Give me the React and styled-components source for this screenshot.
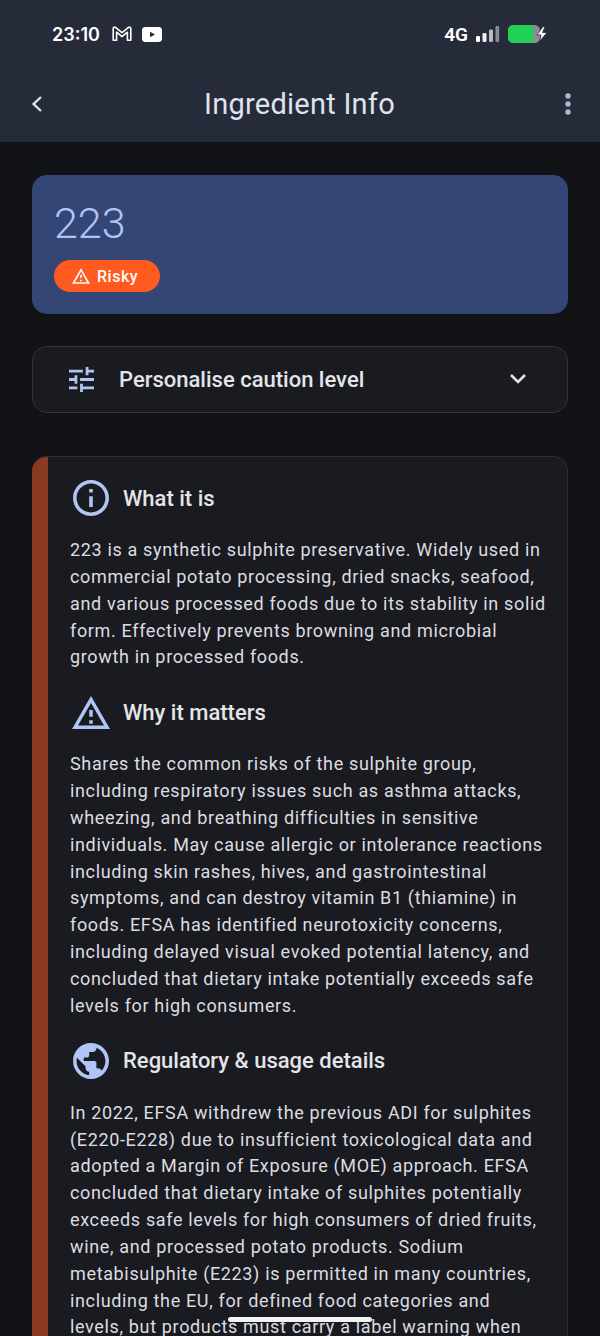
import React from "react";
import styled, { createGlobalStyle } from "styled-components";

const Global = createGlobalStyle`
  html, body { margin: 0; padding: 0; background: #111316; }
  body { width: 600px; height: 1336px; overflow: hidden; font-family: Roboto, "Liberation Sans", sans-serif; }
`;

const Screen = styled.div`
  position: relative;
  width: 600px;
  height: 1336px;
  overflow: hidden;
  background: #111316;
`;

const Header = styled.header`
  height: 142px;
  background: #262b3a;
  display: flex;
  flex-direction: column;
`;

const StatusBar = styled.div`
  height: 68px;
  padding: 0 52px 0 52px;
  display: flex;
  align-items: center;
  justify-content: space-between;
  color: #fff;
  font-family: Inter, Roboto, sans-serif;
  font-weight: 600;
`;

const StatusGroup = styled.div`
  display: flex;
  align-items: center;
  gap: ${p => p.$gap || 8}px;
`;

const Clock = styled.span`
  font-size: 18px;
  margin-right: 2px;
`;

const Network = styled.span`
  font-family: Roboto, sans-serif;
  font-size: 19px;
  font-weight: 600;
`;

const AppBar = styled.div`
  flex: 1;
  display: grid;
  grid-template-columns: 1fr auto 1fr;
  align-items: center;
  padding: 0 28px 2px 27px;
`;

const AppBarEnd = styled.div`
  justify-self: end;
  display: flex;
`;

const AppBarStart = styled.div`
  display: flex;
`;

const Title = styled.h1`
  margin: 0;
  font-size: 29px;
  font-weight: 400;
  letter-spacing: 0.25px;
  color: #dfe2ef;
`;

const Content = styled.main`
  padding: 33px 32px 0;
  display: flex;
  flex-direction: column;
`;

const Hero = styled.section`
  height: 139px;
  box-sizing: border-box;
  background: #334676;
  border-radius: 15px;
  padding: 23px 22px 0;
  display: flex;
  flex-direction: column;
  align-items: flex-start;
`;

const Code = styled.div`
  font-size: 43px;
  line-height: 50px;
  font-weight: 300;
  color: #b0c4f5;
`;

const Badge = styled.div`
  margin-top: 12px;
  height: 32px;
  width: 106px;
  box-sizing: border-box;
  border-radius: 16px;
  background: #ff5a1f;
  color: #fff;
  display: flex;
  align-items: center;
  justify-content: flex-start;
  padding-left: 18px;
  gap: 7px;
  font-size: 16px;
  font-weight: 500;
  letter-spacing: 0.5px;
`;

const Accordion = styled.div`
  margin-top: 32px;
  height: 67px;
  box-sizing: border-box;
  border: 1px solid #33353b;
  border-radius: 15px;
  background: #1a1b20;
  display: flex;
  align-items: center;
  padding: 0 40px 1px 36px;
`;

const AccordionLabel = styled.span`
  flex: 1;
  margin-left: 25px;
  font-size: 22px;
  font-weight: 500;
  color: #e4e4e9;
`;

const InfoCard = styled.article`
  margin-top: 43px;
  display: flex;
  border: 1px solid #2c2e33;
  border-left: 0;
  border-radius: 15px 15px 0 0;
  background: #1a1b20;
  overflow: hidden;
`;

const Accent = styled.div`
  width: 16px;
  flex: none;
  background: #8a3a20;
`;

const InfoBody = styled.div`
  padding: 22px 20px 0 22px;
  flex: 1;
  min-width: 0;
`;

const SectionHead = styled.div`
  display: flex;
  align-items: center;
  gap: 13px;
  height: 38px;
  margin: 0 0 20px 2px;
`;

const IconSlot = styled.span`
  width: 38px;
  height: 38px;
  flex: none;
  display: flex;
  align-items: center;
  justify-content: center;
`;

const SectionTitle = styled.h2`
  margin: 0;
  font-size: 22px;
  font-weight: 500;
  color: #e4e4e9;
`;

const Para = styled.p`
  margin: 0 0 22px;
  font-size: 18px;
  line-height: 26.85px;
  letter-spacing: 0.65px;
  color: #dcdde2;
  white-space: nowrap;
`;

const HomeBar = styled.div`
  position: absolute;
  left: 228px;
  top: 1317px;
  width: 144px;
  height: 5px;
  border-radius: 2.5px;
  background: #f2f2f2;
`;

const Gmail = () => (
  <svg width="20" height="16" viewBox="0 0 20 16" fill="none" stroke="#fff" strokeWidth="1.6" strokeLinejoin="round">
    <path d="M1.2 2.6 C1.2 1.2 2.8 .8 3.8 1.6 L10 6.6 L16.2 1.6 C17.2 .8 18.8 1.2 18.8 2.6 V14.2 H15.4 V6.2 L10 10.6 L4.6 6.2 V14.2 H1.2 Z" />
  </svg>
);

const YouTube = () => (
  <svg width="20" height="15" viewBox="0 0 20 15">
    <rect width="20" height="15" rx="3.4" fill="#fff" />
    <path d="M8 4.7 L13 7.5 L8 10.3 Z" fill="#262b3a" />
  </svg>
);

const Signal = () => (
  <svg width="24" height="16" viewBox="0 0 24 16">
    <rect x="0" y="10" width="4" height="6" rx="1.2" fill="#fff" />
    <rect x="6.5" y="7" width="4" height="9" rx="1.2" fill="#f0f0f0" />
    <rect x="13" y="3.5" width="4" height="12.5" rx="1.2" fill="#b9bbc1" />
    <rect x="19.5" y="0" width="3.6" height="16" rx="1.2" fill="#8b8d94" />
  </svg>
);

const Battery = () => (
  <svg width="40" height="18" viewBox="0 0 40 18">
    <rect x="0" y="0" width="32" height="18" rx="5.5" fill="#8b8d94" />
    <path d="M5.5 0 H25 V18 H5.5 A5.5 5.5 0 0 1 0 12.5 V5.5 A5.5 5.5 0 0 1 5.5 0 Z" fill="#1fd155" />
    <path d="M35 1.5 L29 10 H33 L31.5 16.5 L39 7.5 H34.6 L37 1.5 Z" fill="#fff" stroke="#262b3a" strokeWidth="0.8" />
  </svg>
);

const Back = () => (
  <svg width="20" height="20" viewBox="0 0 20 20" fill="none" stroke="#dfe2ef" strokeWidth="2.4">
    <path d="M14 3 L6.6 10 L14 17" />
  </svg>
);

const Kebab = () => (
  <svg width="8" height="24" viewBox="0 0 8 24" fill="#b4b8cb">
    <circle cx="4" cy="4" r="2.7" />
    <circle cx="4" cy="12" r="2.7" />
    <circle cx="4" cy="20" r="2.7" />
  </svg>
);

const warningPath = "M12 5.99L19.53 19H4.47L12 5.99M12 2L1 21h22L12 2zm1 14h-2v2h2v-2zm0-6h-2v4h2v-4z";

const WarnSmall = () => (
  <svg width="18" height="16" viewBox="1 2 22 19" fill="#fff">
    <path d={warningPath} />
  </svg>
);

const Tune = () => (
  <svg width="25" height="25" viewBox="3 3 18 18" fill="#b0c4f5">
    <path d="M3 17v2h6v-2H3zM3 5v2h10V5H3zm10 16v-2h8v-2h-8v-2h-2v6h2zM7 9v2H3v2h4v2h2V9H7zm14 4v-2H11v2h10zm-6-4h2V7h4V5h-4V3h-2v6z" />
  </svg>
);

const Chevron = () => (
  <svg width="18" height="12" viewBox="0 0 18 12" fill="none" stroke="#e4e4e9" strokeWidth="2.6">
    <path d="M2 2 L9 9 L16 2" />
  </svg>
);

const Info = () => (
  <svg width="36" height="36" viewBox="2 2 20 20" fill="#b0c4f5">
    <path d="M11 7h2v2h-2zm0 4h2v6h-2zm1-9C6.48 2 2 6.48 2 12s4.48 10 10 10 10-4.48 10-10S17.52 2 12 2zm0 18c-4.41 0-8-3.59-8-8s3.59-8 8-8 8 3.59 8 8-3.59 8-8 8z" />
  </svg>
);

const Warn = () => (
  <svg width="38" height="33" viewBox="1 2 22 19" fill="#b0c4f5">
    <path d={warningPath} />
  </svg>
);

const Globe = () => (
  <svg width="36" height="36" viewBox="2 2 20 20" fill="#b0c4f5">
    <path d="M12 2C6.48 2 2 6.48 2 12s4.48 10 10 10 10-4.48 10-10S17.52 2 12 2zm-1 17.93c-3.95-.49-7-3.85-7-7.93 0-.62.08-1.21.21-1.79L9 15v1c0 1.1.9 2 2 2v1.93zm6.9-2.54c-.26-.81-1-1.39-1.9-1.39h-1v-3c0-.55-.45-1-1-1H8v-2h2c.55 0 1-.45 1-1V7h2c1.1 0 2-.9 2-2v-.41c2.93 1.19 5 4.06 5 7.41 0 2.08-.8 3.97-2.1 5.39z" />
  </svg>
);

const sections = [
  {
    icon: <Info />,
    title: "What it is",
    lines: [
      "223 is a synthetic sulphite preservative. Widely used in",
      "commercial potato processing, dried snacks, seafood,",
      "and various processed foods due to its stability in solid",
      "form. Effectively prevents browning and microbial",
      "growth in processed foods.",
    ],
  },
  {
    icon: <Warn />,
    title: "Why it matters",
    lines: [
      "Shares the common risks of the sulphite group,",
      "including respiratory issues such as asthma attacks,",
      "wheezing, and breathing difficulties in sensitive",
      "individuals. May cause allergic or intolerance reactions",
      "including skin rashes, hives, and gastrointestinal",
      "symptoms, and can destroy vitamin B1 (thiamine) in",
      "foods. EFSA has identified neurotoxicity concerns,",
      "including delayed visual evoked potential latency, and",
      "concluded that dietary intake potentially exceeds safe",
      "levels for high consumers.",
    ],
  },
  {
    icon: <Globe />,
    title: "Regulatory & usage details",
    lines: [
      "In 2022, EFSA withdrew the previous ADI for sulphites",
      "(E220-E228) due to insufficient toxicological data and",
      "adopted a Margin of Exposure (MOE) approach. EFSA",
      "concluded that dietary intake of sulphites potentially",
      "exceeds safe levels for high consumers of dried fruits,",
      "wine, and processed potato products. Sodium",
      "metabisulphite (E223) is permitted in many countries,",
      "including the EU, for defined food categories and",
      "levels, but products must carry a label warning when",
    ],
  },
];

export default function App() {
  return (
    <Screen>
      <Global />
      <Header>
        <StatusBar>
          <StatusGroup $gap={10}>
            <Clock>23:10</Clock>
            <Gmail />
            <YouTube />
          </StatusGroup>
          <StatusGroup $gap={8}>
            <Network>4G</Network>
            <Signal />
            <Battery />
          </StatusGroup>
        </StatusBar>
        <AppBar>
          <AppBarStart><Back /></AppBarStart>
          <Title>Ingredient Info</Title>
          <AppBarEnd><Kebab /></AppBarEnd>
        </AppBar>
      </Header>
      <Content>
        <Hero>
          <Code>223</Code>
          <Badge>
            <WarnSmall />
            Risky
          </Badge>
        </Hero>
        <Accordion>
          <Tune />
          <AccordionLabel>Personalise caution level</AccordionLabel>
          <Chevron />
        </Accordion>
        <InfoCard>
          <Accent />
          <InfoBody>
            {sections.map(s => (
              <section key={s.title}>
                <SectionHead>
                  <IconSlot>{s.icon}</IconSlot>
                  <SectionTitle>{s.title}</SectionTitle>
                </SectionHead>
                <Para>
                  {s.lines.map(l => (
                    <React.Fragment key={l}>
                      {l}
                      <br />
                    </React.Fragment>
                  ))}
                </Para>
              </section>
            ))}
          </InfoBody>
        </InfoCard>
      </Content>
      <HomeBar />
    </Screen>
  );
}
